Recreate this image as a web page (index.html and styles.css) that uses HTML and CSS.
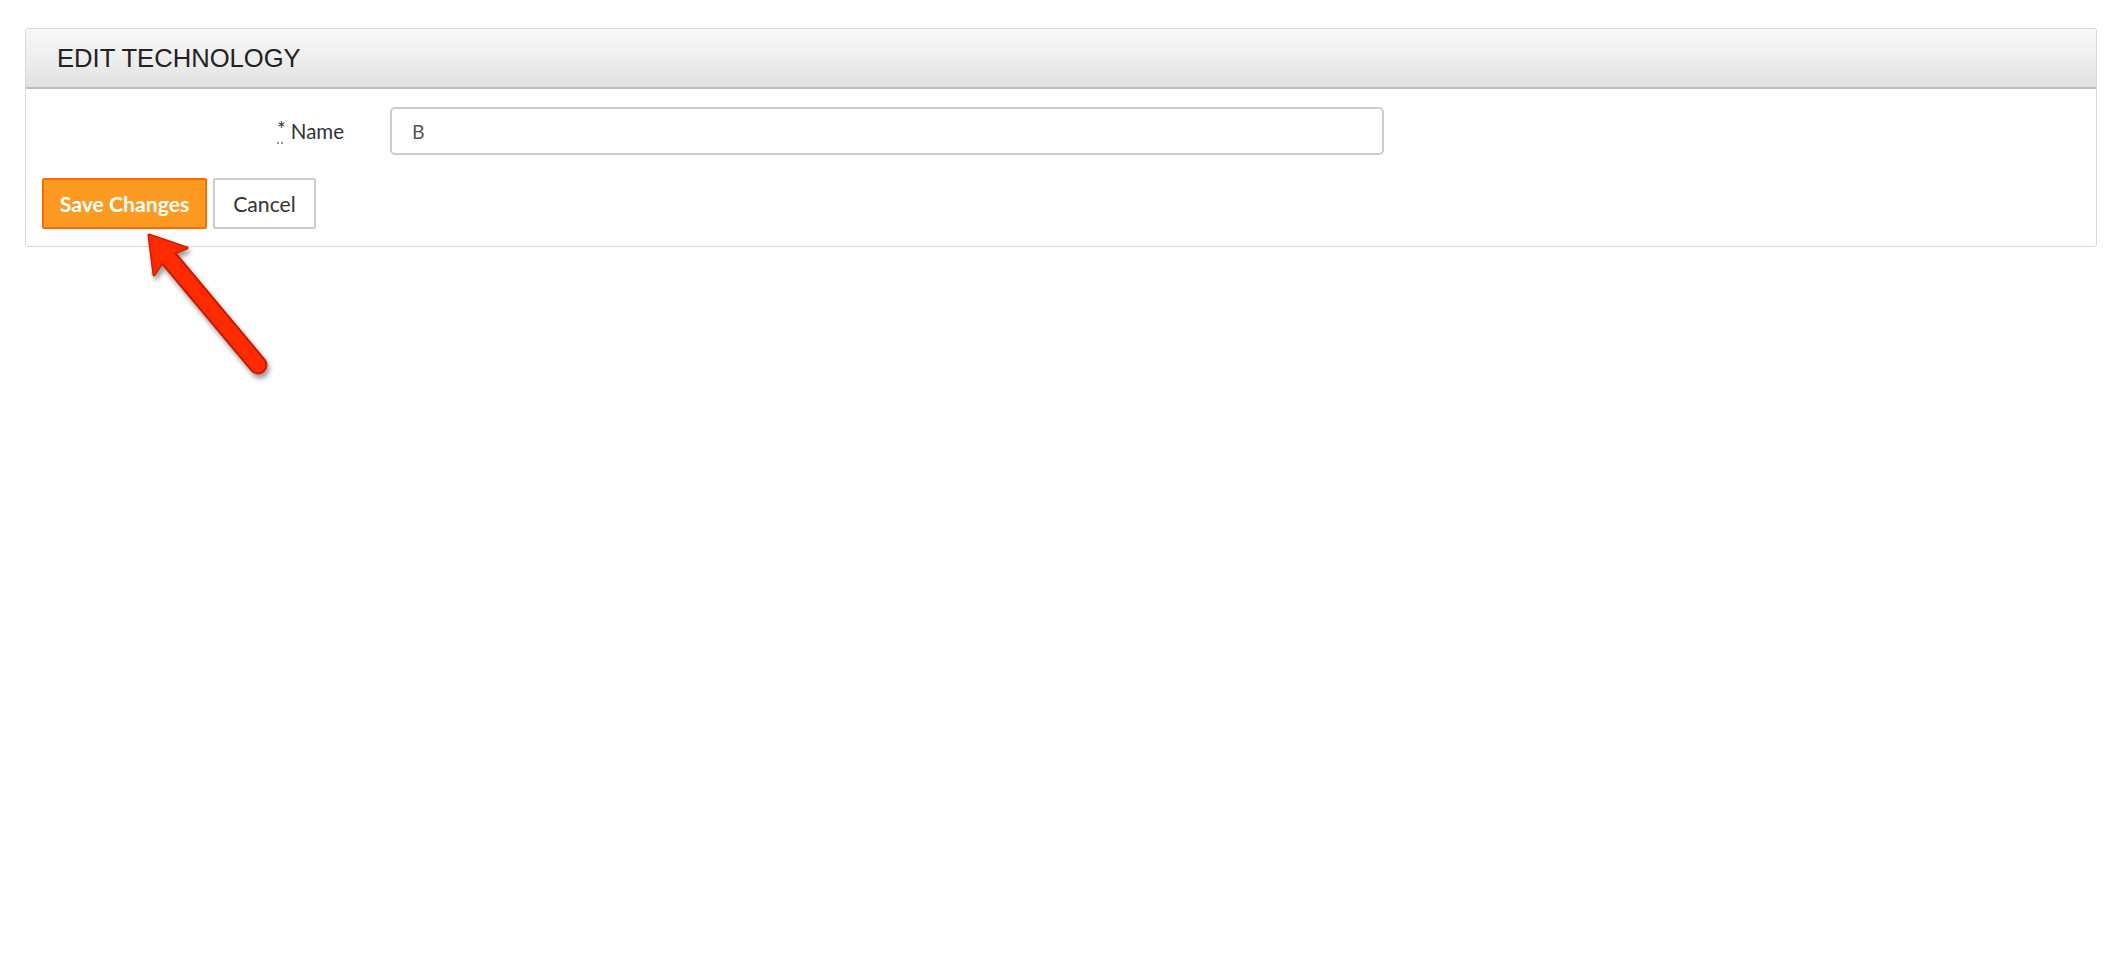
FILE: index.html
```html
<!DOCTYPE html>
<html>
<head>
<meta charset="utf-8">
<title>Edit Technology</title>
<link rel="stylesheet" href="styles.css">
</head>
<body>
<div class="page">
  <div class="panel">
    <div class="panel-heading">EDIT TECHNOLOGY</div>
    <div class="panel-body">
      <div class="form-row">
        <label class="form-label"><abbr class="req" title="required">*</abbr>Name</label>
        <input class="form-input" type="text" value="B">
      </div>
      <div class="actions">
        <button class="btn btn-primary">Save Changes</button>
        <button class="btn btn-default">Cancel</button>
      </div>
    </div>
  </div>
  <svg class="arrow" width="170" height="180" viewBox="0 0 170 180">
    <defs>
      <filter id="shadow" x="-30%" y="-30%" width="160%" height="160%">
        <feGaussianBlur in="SourceAlpha" stdDeviation="2.5"/>
        <feOffset dx="2" dy="4" result="blur"/>
        <feComponentTransfer><feFuncA type="linear" slope="0.4"/></feComponentTransfer>
        <feMerge><feMergeNode/><feMergeNode in="SourceGraphic"/></feMerge>
      </filter>
    </defs>
    <g filter="url(#shadow)">
      <line x1="36" y1="30" x2="128" y2="140" stroke="#c41c00" stroke-width="19" stroke-linecap="round"/>
      <polygon points="19,10 57,23 44,28 32,38 24,50" fill="#c41c00" stroke="#c41c00" stroke-width="3" stroke-linejoin="round"/>
      <polygon points="19,10 57,23 44,28 32,38 24,50" fill="#ff2a00" stroke="#ff2a00" stroke-width="0.5" stroke-linejoin="round"/>
      <line x1="36" y1="30" x2="128" y2="140" stroke="#ff2a00" stroke-width="15" stroke-linecap="round"/>
    </g>
  </svg>
</div>
</body>
</html>
```

FILE: styles.css
```css
html, body {
  margin: 0;
  padding: 0;
  background: #ffffff;
}

.page {
  position: relative;
  min-height: 976px;
  box-sizing: border-box;
  padding: 28px 29px 0 25px;
  font-family: "Lato", "Liberation Sans", sans-serif;
  color: #333;
}

.panel {
  border: 1px solid #d6dadf;
  border-radius: 3px;
  background: #fff;
}

.panel-heading {
  height: 58px;
  line-height: 58px;
  padding-left: 31px;
  font-family: "Liberation Sans", Arial, sans-serif;
  font-size: 25.6px;
  color: #222;
  background: linear-gradient(to bottom, #f8f8f8 0%, #ececec 60%, #e0e0e0 100%);
  border-bottom: 2px solid #bdbdbd;
  border-radius: 3px 3px 0 0;
}

.panel-body {
  padding: 18px 16px 17px 16px;
}

.form-row {
  display: flex;
  align-items: center;
  gap: 46px;
}

.form-label {
  width: 302px;
  text-align: right;
  font-size: 20.5px;
  color: #333;
}

.req {
  display: inline-block;
  margin-right: 5px;
  text-decoration: underline dotted #999;
  text-underline-offset: 5px;
  cursor: help;
  position: relative;
  top: -2px;
}

.form-input {
  box-sizing: border-box;
  width: 994px;
  height: 48px;
  margin: 0;
  padding: 0 20px;
  border: 2px solid #cccccc;
  border-radius: 5px;
  font-family: "Lato", "Liberation Sans", sans-serif;
  font-size: 19.5px;
  color: #555;
  background: #fff;
  outline: none;
}

.actions {
  display: flex;
  gap: 6px;
  margin-top: 23px;
}

.btn {
  box-sizing: border-box;
  height: 51px;
  margin: 0;
  padding: 0 10px;
  font-family: "Lato", "Liberation Sans", sans-serif;
  font-size: 21.2px;
  border-radius: 2px;
  cursor: pointer;
}

.btn-primary {
  width: 165px;
  background: #fc9a22;
  border: 2px solid #ff6a00;
  color: #fff;
  font-weight: bold;
}

.btn-default {
  width: 103px;
  background: #fff;
  border: 2px solid #cccccc;
  color: #333;
}

.arrow {
  position: absolute;
  left: 130px;
  top: 225px;
  overflow: visible;
}
```
